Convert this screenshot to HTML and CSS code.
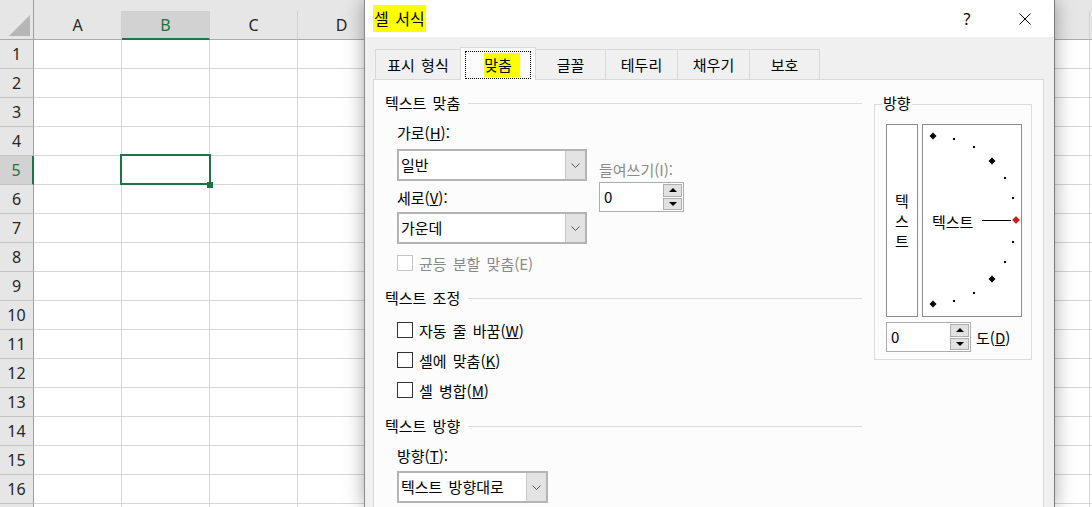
FILE: index.html
```html
<!DOCTYPE html>
<html lang="ko">
<head>
  <meta charset="utf-8">
  <title>셀 서식</title>
  <link rel="stylesheet" href="styles.css">
</head>
<body>
  <div class="sheet">
    <div class="col-heads">
      <div class="corner"><span class="corner-tri"></span></div>
      <div class="col-head">A</div>
      <div class="col-head active">B</div>
      <div class="col-head">C</div>
      <div class="col-head">D</div>
      <div class="col-head">E</div>
      <div class="col-head">F</div>
      <div class="col-head">G</div>
      <div class="col-head">H</div>
      <div class="col-head">I</div>
      <div class="col-head">J</div>
      <div class="col-head">K</div>
      <div class="col-head">L</div>
      <div class="col-head"></div>
    </div>
    <div class="sheet-body">
      <div class="row-heads">
        <div class="row-head">1</div>
        <div class="row-head">2</div>
        <div class="row-head">3</div>
        <div class="row-head">4</div>
        <div class="row-head active">5</div>
        <div class="row-head">6</div>
        <div class="row-head">7</div>
        <div class="row-head">8</div>
        <div class="row-head">9</div>
        <div class="row-head">10</div>
        <div class="row-head">11</div>
        <div class="row-head">12</div>
        <div class="row-head">13</div>
        <div class="row-head">14</div>
        <div class="row-head">15</div>
        <div class="row-head">16</div>
        <div class="row-head"></div>
      </div>
      <div class="cells">
        <div class="cursor"><span class="fill-handle"></span></div>
      </div>
    </div>
  </div>

  <div class="dialog">
    <div class="titlebar">
      <span class="title"><mark>셀 서식</mark></span>
      <span class="help">?</span>
      <span class="close">
        <svg width="12" height="12" viewBox="0 0 12 12">
          <path d="M0.5 0.5 L11.5 11.5 M11.5 0.5 L0.5 11.5" stroke="#000" stroke-width="1" fill="none"/>
        </svg>
      </span>
    </div>

    <div class="dialog-body">
      <div class="tabs">
        <div class="tab" style="width: 86px">표시 형식</div>
        <div class="tab selected" style="width: 76px"><span class="focus"><mark>맞춤</mark></span></div>
        <div class="tab" style="width: 71px">글꼴</div>
        <div class="tab" style="width: 73px">테두리</div>
        <div class="tab" style="width: 73px">채우기</div>
        <div class="tab" style="width: 71px">보호</div>
      </div>

      <div class="page">
        <div class="page-left">
          <div class="group-title">텍스트 맞춤</div>
          <div class="align-grid">
            <div class="fields">
              <div class="label">가로(<u>H</u>):</div>
              <div class="select gap-6">
                <span class="value">일반</span>
                <span class="arrow"><svg width="9" height="5" viewBox="0 0 9 5"><path d="M0.5 0.5 L4.5 4.5 L8.5 0.5" stroke="#555" fill="none"/></svg></span>
              </div>
              <div class="label gap-7">세로(<u>V</u>):</div>
              <div class="select gap-4">
                <span class="value">가운데</span>
                <span class="arrow"><svg width="9" height="5" viewBox="0 0 9 5"><path d="M0.5 0.5 L4.5 4.5 L8.5 0.5" stroke="#555" fill="none"/></svg></span>
              </div>
            </div>
            <div class="indent">
              <div class="label disabled">들여쓰기(I):</div>
              <div class="spin gap-2">
                <span class="value">0</span>
                <span class="spin-btns"><span><i class="tri-up"></i></span><span><i class="tri-down"></i></span></span>
              </div>
            </div>
          </div>
          <div class="check-row disabled gap-9"><span class="box"></span><span>균등 분할 맞춤(E)</span></div>

          <div class="group-title gap-15">텍스트 조정</div>
          <div class="check-row gap-12"><span class="box"></span><span>자동 줄 바꿈(<u>W</u>)</span></div>
          <div class="check-row gap-10"><span class="box"></span><span>셀에 맞춤(<u>K</u>)</span></div>
          <div class="check-row gap-10"><span class="box"></span><span>셀 병합(<u>M</u>)</span></div>

          <div class="group-title gap-16">텍스트 방향</div>
          <div class="label indented gap-10">방향(<u>T</u>):</div>
          <div class="select indented narrow gap-5">
            <span class="value">텍스트 방향대로</span>
            <span class="arrow"><svg width="9" height="5" viewBox="0 0 9 5"><path d="M0.5 0.5 L4.5 4.5 L8.5 0.5" stroke="#555" fill="none"/></svg></span>
          </div>
        </div>

        <div class="orient">
          <span class="legend">방향</span>
          <div class="orient-main">
            <div class="vtext"><span>텍</span><span>스</span><span>트</span></div>
            <div class="dial">
              <svg width="98" height="191" viewBox="0 0 98 191">
                <g fill="#000">
                  <polygon points="10,7.5 13.5,11 10,14.5 6.5,11"/>
                  <polygon points="69,32.5 72.5,36 69,39.5 65.5,36"/>
                  <polygon points="69,150.5 72.5,154 69,157.5 65.5,154"/>
                  <polygon points="10,175.5 13.5,179 10,182.5 6.5,179"/>
                  <rect x="30" y="13" width="2" height="2"/>
                  <rect x="50" y="21" width="2" height="2"/>
                  <rect x="81" y="52" width="2" height="2"/>
                  <rect x="89" y="72" width="2" height="2"/>
                  <rect x="89" y="116" width="2" height="2"/>
                  <rect x="81" y="136" width="2" height="2"/>
                  <rect x="50" y="167" width="2" height="2"/>
                  <rect x="30" y="175" width="2" height="2"/>
                </g>
                <path d="M59 95.5 L88 95.5" stroke="#000" stroke-width="1"/>
                <polygon points="93,91.5 96.5,95 93,98.5 89.5,95" fill="#e01010" stroke="#800" stroke-width="0.5"/>
              </svg>
              <span class="dial-text">텍스트</span>
            </div>
          </div>
          <div class="orient-spin">
            <div class="spin">
              <span class="value">0</span>
              <span class="spin-btns"><span><i class="tri-up"></i></span><span><i class="tri-down"></i></span></span>
            </div>
            <span>도(<u>D</u>)</span>
          </div>
        </div>
      </div>
    </div>
  </div>
</body>
</html>
```

FILE: styles.css
```css
* {
  box-sizing: border-box;
}

body {
  margin: 0;
  width: 1092px;
  height: 507px;
  overflow: hidden;
  position: relative;
  background: #fff;
  font-family: "Noto Sans CJK KR", "Noto Sans", sans-serif;
}

/* spreadsheet behind the dialog */

.sheet {
  font-family: "Noto Sans", "Liberation Sans", sans-serif;
  font-size: 16px;
  color: #262626;
}

.col-heads {
  display: flex;
  align-items: flex-end;
  height: 40px;
  background: #e6e6e6;
}

.corner {
  flex: none;
  width: 34px;
  height: 40px;
  padding: 15px 0 0 9px;
  border-right: 1px solid #9e9e9e;
  border-bottom: 1px solid #ababab;
}

.corner-tri {
  display: block;
  width: 0;
  height: 0;
  border-left: 21px solid transparent;
  border-bottom: 21px solid #b6b6b6;
}

.col-head {
  flex: none;
  width: 88px;
  height: 29px;
  display: flex;
  align-items: center;
  justify-content: center;
  border-right: 1px solid #d0d0d0;
  border-bottom: 1px solid #ababab;
}

.col-head.active {
  background: #d2d2d2;
  color: #217346;
  border-bottom: 2px solid #217346;
}

.sheet-body {
  display: flex;
  height: 467px;
}

.row-heads {
  flex: none;
  width: 34px;
  background: #e6e6e6;
}

.row-head {
  height: 29px;
  display: flex;
  align-items: center;
  justify-content: center;
  border-right: 1px solid #9e9e9e;
  border-bottom: 1px solid #c4c4c4;
}

.row-head.active {
  background: #d2d2d2;
  color: #217346;
  border-right: 2px solid #217346;
}

.cells {
  flex: 1;
  position: relative;
  background-image:
    linear-gradient(to right, #d6d6d6 1px, transparent 1px),
    linear-gradient(to bottom, #d6d6d6 1px, transparent 1px);
  background-size: 88px 29px;
  background-position: 87px 28px;
}

.cursor {
  position: absolute;
  left: 86px;
  top: 114px;
  width: 91px;
  height: 31px;
  border: 2px solid #217346;
}

.fill-handle {
  position: absolute;
  right: -4px;
  bottom: -5px;
  width: 6px;
  height: 6px;
  background: #217346;
}

/* format cells dialog */

.dialog {
  position: absolute;
  left: 364px;
  top: 0;
  width: 691px;
  height: 507px;
  background: #f0f0f0;
  border-left: 1px solid #8a8a8a;
  border-right: 1px solid #7a7a7a;
  box-shadow: 0 0 18px rgba(0, 0, 0, 0.35);
  color: #000;
  font-size: 15px;
  word-spacing: 2px;
}

mark {
  background: #ffff00;
  color: #000;
}

.titlebar {
  height: 37px;
  background: #fff;
  display: flex;
  align-items: center;
  padding: 0 6px 0 8px;
}

.title {
  font-size: 16px;
}

.title mark {
  display: inline-block;
  padding: 3px 1px;
  line-height: 21px;
}

.help {
  margin-left: auto;
  width: 30px;
  text-align: center;
  font-family: "Noto Sans", sans-serif;
  font-size: 16px;
}

.close {
  width: 46px;
  margin-left: 20px;
  display: flex;
  justify-content: center;
}

.close svg {
  display: block;
}

.dialog-body {
  padding: 12px 10px 0 8px;
}

.tabs {
  display: flex;
  align-items: flex-end;
  height: 30px;
  padding-left: 2px;
}

.tab {
  flex: none;
  height: 30px;
  margin-left: -1px;
  border: 1px solid #d9d9d9;
  border-bottom: 0;
  background: #f0f0f0;
  display: flex;
  align-items: center;
  justify-content: center;
}

.tab:first-child {
  margin-left: 0;
}

.tab.selected {
  height: 33px;
  margin-bottom: -1px;
  background: #fcfcfc;
  position: relative;
  z-index: 1;
  align-items: stretch;
}

.focus {
  flex: 1;
  margin: 3px 4px 1px;
  border: 1px dotted #000;
  display: flex;
  align-items: center;
  justify-content: center;
}

.focus mark {
  padding: 2px 8px 2px 0;
  margin-right: -8px;
  line-height: 20px;
}

.page {
  display: flex;
  gap: 12px;
  height: 440px;
  border: 1px solid #d9d9d9;
  background: #fcfcfc;
  padding: 13px 11px 0 10px;
}

.page-left {
  flex: none;
  width: 478px;
}

.group-title {
  display: flex;
  align-items: center;
  gap: 8px;
  height: 20px;
  line-height: 20px;
  padding-left: 1px;
}

.group-title::after {
  content: "";
  flex: 1;
  height: 1px;
  margin-top: 1px;
  background: #dcdcdc;
}

.label {
  height: 20px;
  line-height: 20px;
}

.label.disabled,
.check-row.disabled {
  color: #8a8a8a;
}

.indented {
  margin-left: 13px;
}

.align-grid {
  display: flex;
  gap: 12px;
  margin: 10px 0 0 13px;
}

.fields {
  width: 190px;
}

.indent {
  margin-top: 37px;
}

.select {
  display: flex;
  height: 32px;
  border: 2px solid #b4b4b4;
  background: #fff;
}

.select.narrow {
  width: 151px;
}

.select .value {
  flex: 1;
  padding-left: 2px;
  line-height: 28px;
  white-space: nowrap;
}

.select .arrow {
  width: 20px;
  background: #e3e3e3;
  border-left: 1px solid #c9c9c9;
  display: flex;
  align-items: center;
  justify-content: center;
}

.arrow svg {
  display: block;
}

.spin {
  display: flex;
  width: 85px;
  height: 30px;
  padding: 1px;
  border: 1px solid #adadad;
  background: #fff;
}

.spin .value {
  flex: 1;
  padding-left: 3px;
  line-height: 26px;
}

.spin-btns {
  width: 19px;
  display: flex;
  flex-direction: column;
  gap: 1px;
}

.spin-btns span {
  flex: 1;
  background: #e1e1e1;
  border: 1px solid #adadad;
  display: flex;
  align-items: center;
  justify-content: center;
}

.tri-up,
.tri-down {
  display: block;
  width: 0;
  height: 0;
  border-left: 4px solid transparent;
  border-right: 4px solid transparent;
}

.tri-up {
  border-bottom: 4px solid #000;
}

.tri-down {
  border-top: 4px solid #000;
}

.check-row {
  display: flex;
  align-items: center;
  gap: 6px;
  height: 20px;
  margin-left: 13px;
  white-space: nowrap;
}

.box {
  flex: none;
  width: 16px;
  height: 16px;
  border: 1px solid #333;
  background: #fff;
}

.check-row.disabled .box {
  border-color: #c6c6c6;
}

.gap-2 { margin-top: 2px; }
.gap-4 { margin-top: 4px; }
.gap-5 { margin-top: 5px; }
.gap-6 { margin-top: 6px; }
.gap-7 { margin-top: 7px; }
.gap-9 { margin-top: 9px; }
.gap-10 { margin-top: 10px; }
.gap-12 { margin-top: 12px; }
.gap-15 { margin-top: 15px; }
.gap-16 { margin-top: 16px; }

.orient {
  flex: none;
  position: relative;
  width: 158px;
  height: 256px;
  margin-top: 11px;
  padding: 19px 9px 0 11px;
  border: 1px solid #dcdcdc;
}

.legend {
  position: absolute;
  top: -12px;
  left: 7px;
  padding: 0 1px;
  line-height: 20px;
  background: #fcfcfc;
}

.orient-main {
  display: flex;
  gap: 4px;
  height: 193px;
}

.vtext {
  width: 32px;
  border: 1px solid #8c8c8c;
  background: #fff;
  display: flex;
  flex-direction: column;
  align-items: center;
  justify-content: center;
  line-height: 20px;
}

.dial {
  position: relative;
  width: 100px;
  border: 1px solid #8c8c8c;
  background: #fff;
}

.dial svg {
  display: block;
}

.dial-text {
  position: absolute;
  left: 9px;
  top: 87px;
  line-height: 20px;
}

.orient-spin {
  display: flex;
  align-items: center;
  gap: 5px;
  margin-top: 5px;
}
```
